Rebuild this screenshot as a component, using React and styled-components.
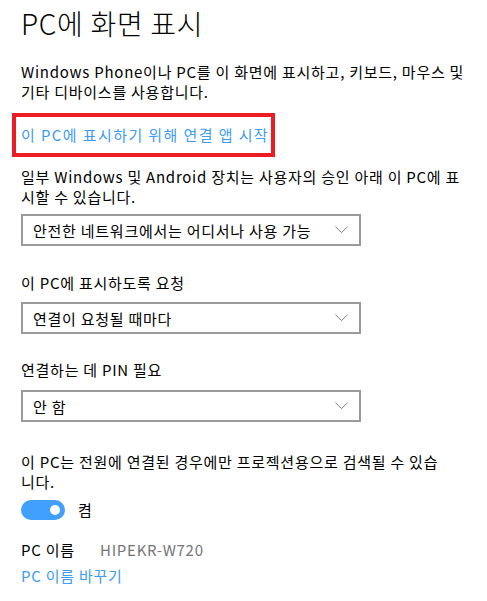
import React, { useState } from "react";
import styled, { createGlobalStyle } from "styled-components";

const GlobalStyle = createGlobalStyle`
    html, body {
        margin: 0;
        padding: 0;
        background: #fff;
    }
    body {
        font-family: "Noto Sans CJK KR", "Noto Sans", sans-serif;
        color: #000;
        letter-spacing: 0.75px;
    }
`;

const Page = styled.div`
    width: 487px;
    height: 601px;
    overflow: hidden;
    padding: 0 21px;
    box-sizing: border-box;
    background: #fff;
`;

const Title = styled.h1`
    margin: 0;
    padding-top: 3px;
    font-size: 28px;
    font-weight: 300;
    line-height: 40px;
    letter-spacing: 0.7px;
`;

const Text = styled.p`
    margin: ${(p) => p.$top || 0}px 0 0;
    font-size: 15px;
    line-height: 20px;
    white-space: nowrap;
`;

const LinkBox = styled.div`
    margin: 11px 0 0 -9px;
    width: 263px;
    height: 44px;
    border: 4px solid #ed1c24;
    box-sizing: border-box;
    display: flex;
    align-items: center;
    padding-left: 5px;
`;

const Link = styled.a`
    color: #3d9cf2;
    font-size: 15px;
    line-height: 20px;
    letter-spacing: ${(p) => (p.$wide ? "1.4px" : "0.75px")};
    text-decoration: none;
    cursor: pointer;
    display: block;
    margin-top: ${(p) => p.$top || 0}px;
`;

const Label = styled.div`
    margin-top: ${(p) => p.$top || 0}px;
    font-size: 15px;
    line-height: 20px;
`;

const Select = styled.div`
    margin-top: ${(p) => p.$top || 0}px;
    width: 340px;
    height: 32px;
    border: 2px solid #999;
    box-sizing: border-box;
    display: flex;
    align-items: center;
    justify-content: space-between;
    padding: 0 11px 0 10px;
    font-size: 15px;
`;

const Chevron = () => (
    <svg width="13" height="8" viewBox="0 0 13 8">
        <path d="M0.5 0.8 L6.5 6.6 L12.5 0.8" fill="none" stroke="#777" strokeWidth="1" />
    </svg>
);

const ToggleRow = styled.div`
    margin-top: 8px;
    display: flex;
    align-items: center;
    gap: 13px;
    font-size: 15px;
    line-height: 20px;
`;

const Track = styled.button`
    width: 44px;
    height: 20px;
    border-radius: 10px;
    border: none;
    padding: 0 5px;
    background: ${(p) => (p.$on ? "#419ffd" : "#999")};
    display: flex;
    align-items: center;
    justify-content: ${(p) => (p.$on ? "flex-end" : "flex-start")};
    cursor: pointer;
`;

const Knob = styled.span`
    width: 10px;
    height: 10px;
    border-radius: 50%;
    background: #fff;
`;

const NameRow = styled.div`
    margin-top: 20px;
    display: grid;
    grid-template-columns: 79px auto;
    font-size: 15px;
    line-height: 20px;
`;

const Value = styled.span`
    color: #767676;
`;

const App = () => {
    const [on, setOn] = useState(true);

    return (
        <Page>
            <GlobalStyle />
            <Title>PC에 화면 표시</Title>
            <Text $top={19}>
                Windows Phone이나 PC를 이 화면에 표시하고, 키보드, 마우스 및<br />
                기타 디바이스를 사용합니다.
            </Text>
            <LinkBox>
                <Link $wide>이 PC에 표시하기 위해 연결 앱 시작</Link>
            </LinkBox>
            <Text $top={10}>
                일부 Windows 및 Android 장치는 사용자의 승인 아래 이 PC에 표<br />
                시할 수 있습니다.
            </Text>
            <Select $top={7}>
                <span>안전한 네트워크에서는 어디서나 사용 가능</span>
                <Chevron />
            </Select>
            <Label $top={27}>이 PC에 표시하도록 요청</Label>
            <Select $top={9}>
                <span>연결이 요청될 때마다</span>
                <Chevron />
            </Select>
            <Label $top={26}>연결하는 데 PIN 필요</Label>
            <Select $top={10}>
                <span>안 함</span>
                <Chevron />
            </Select>
            <Text $top={30}>
                이 PC는 전원에 연결된 경우에만 프로젝션용으로 검색될 수 있습<br />
                니다.
            </Text>
            <ToggleRow>
                <Track $on={on} onClick={() => setOn(!on)}>
                    <Knob />
                </Track>
                <span>{on ? "켬" : "끔"}</span>
            </ToggleRow>
            <NameRow>
                <span>PC 이름</span>
                <Value>HIPEKR-W720</Value>
            </NameRow>
            <Link $top={6}>PC 이름 바꾸기</Link>
        </Page>
    );
};

export default App;
